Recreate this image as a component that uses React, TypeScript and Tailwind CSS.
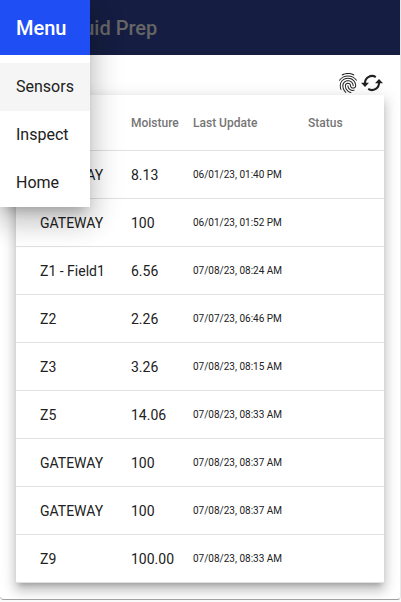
import { MdFingerprint } from "react-icons/md";

const rows = [
  ["GATEWAY", "8.13", "06/01/23, 01:40 PM"],
  ["GATEWAY", "100", "06/01/23, 01:52 PM"],
  ["Z1 - Field1", "6.56", "07/08/23, 08:24 AM"],
  ["Z2", "2.26", "07/07/23, 06:46 PM"],
  ["Z3", "3.26", "07/08/23, 08:15 AM"],
  ["Z5", "14.06", "07/08/23, 08:33 AM"],
  ["GATEWAY", "100", "07/08/23, 08:37 AM"],
  ["GATEWAY", "100", "07/08/23, 08:37 AM"],
  ["Z9", "100.00", "07/08/23, 08:33 AM"],
];

function SyncIcon() {
  return (
    <svg width="24" height="24" viewBox="0 0 24 24" fill="none" stroke="currentColor" strokeWidth="2.1">
      <path d="M5 12a7 7 0 0 1 10.8-5.9M19 12a7 7 0 0 1-10.8 5.9" />
      <path d="M1 11.7h8L5 16zM15 12.3h8L19 8z" fill="currentColor" stroke="none" />
    </svg>
  );
}

export default function App() {
  return (
    <div className="relative h-[602px] w-[401px] overflow-hidden bg-[#fafafa] font-['Roboto',sans-serif] text-[#212121]">
      <div className="h-[600px] w-[401px] overflow-hidden rounded-b-[4px] border-r border-b border-r-[#e8e8e8] border-b-[#a0a0a0] bg-white">
        <header className="flex h-[55px] items-center bg-[#151e42] pl-14 text-xl font-medium text-[#666]">Liquid Prep</header>
        <div className="flex h-10 items-end justify-end pr-4">
          <MdFingerprint size={24} className="h-6 w-6" />
          <SyncIcon />
        </div>
        <main className="relative mx-4 bg-white shadow-[0_5px_5px_-3px_rgba(0,0,0,.2),0_8px_10px_1px_rgba(0,0,0,.14),0_3px_14px_2px_rgba(0,0,0,.12)]">
          <div className="grid h-14 grid-cols-[91px_62px_115px_1fr] items-center border-b border-[#e0e0e0] pl-6 text-xs font-medium text-[#757575]">
            <span>Name</span><span>Moisture</span><span>Last Update</span><span>Status</span>
          </div>
          {rows.map((r, i) => (
            <div key={i} className="grid h-12 grid-cols-[91px_62px_115px_1fr] items-center border-b border-[#e0e0e0] pl-6 text-sm">
              <span>{r[0]}</span><span>{r[1]}</span><span className="pt-px text-[10px]">{r[2]}</span>
            </div>
          ))}
        </main>
      </div>
      <nav className="absolute left-0 top-0 h-[207px] w-[90px] bg-white text-base shadow-[0_8px_10px_-5px_rgba(0,0,0,.2),0_16px_24px_2px_rgba(0,0,0,.14),0_6px_30px_5px_rgba(0,0,0,.12)]">
        <div className="mb-2 flex h-[55px] items-center bg-[#1f4ef5] pl-4 text-xl font-medium text-white">Menu</div>
        <div className="flex h-12 items-center bg-[#f5f5f5] pl-4">Sensors</div>
        <div className="flex h-12 items-center pl-4">Inspect</div>
        <div className="flex h-12 items-center pl-4">Home</div>
      </nav>
    </div>
  );
}
